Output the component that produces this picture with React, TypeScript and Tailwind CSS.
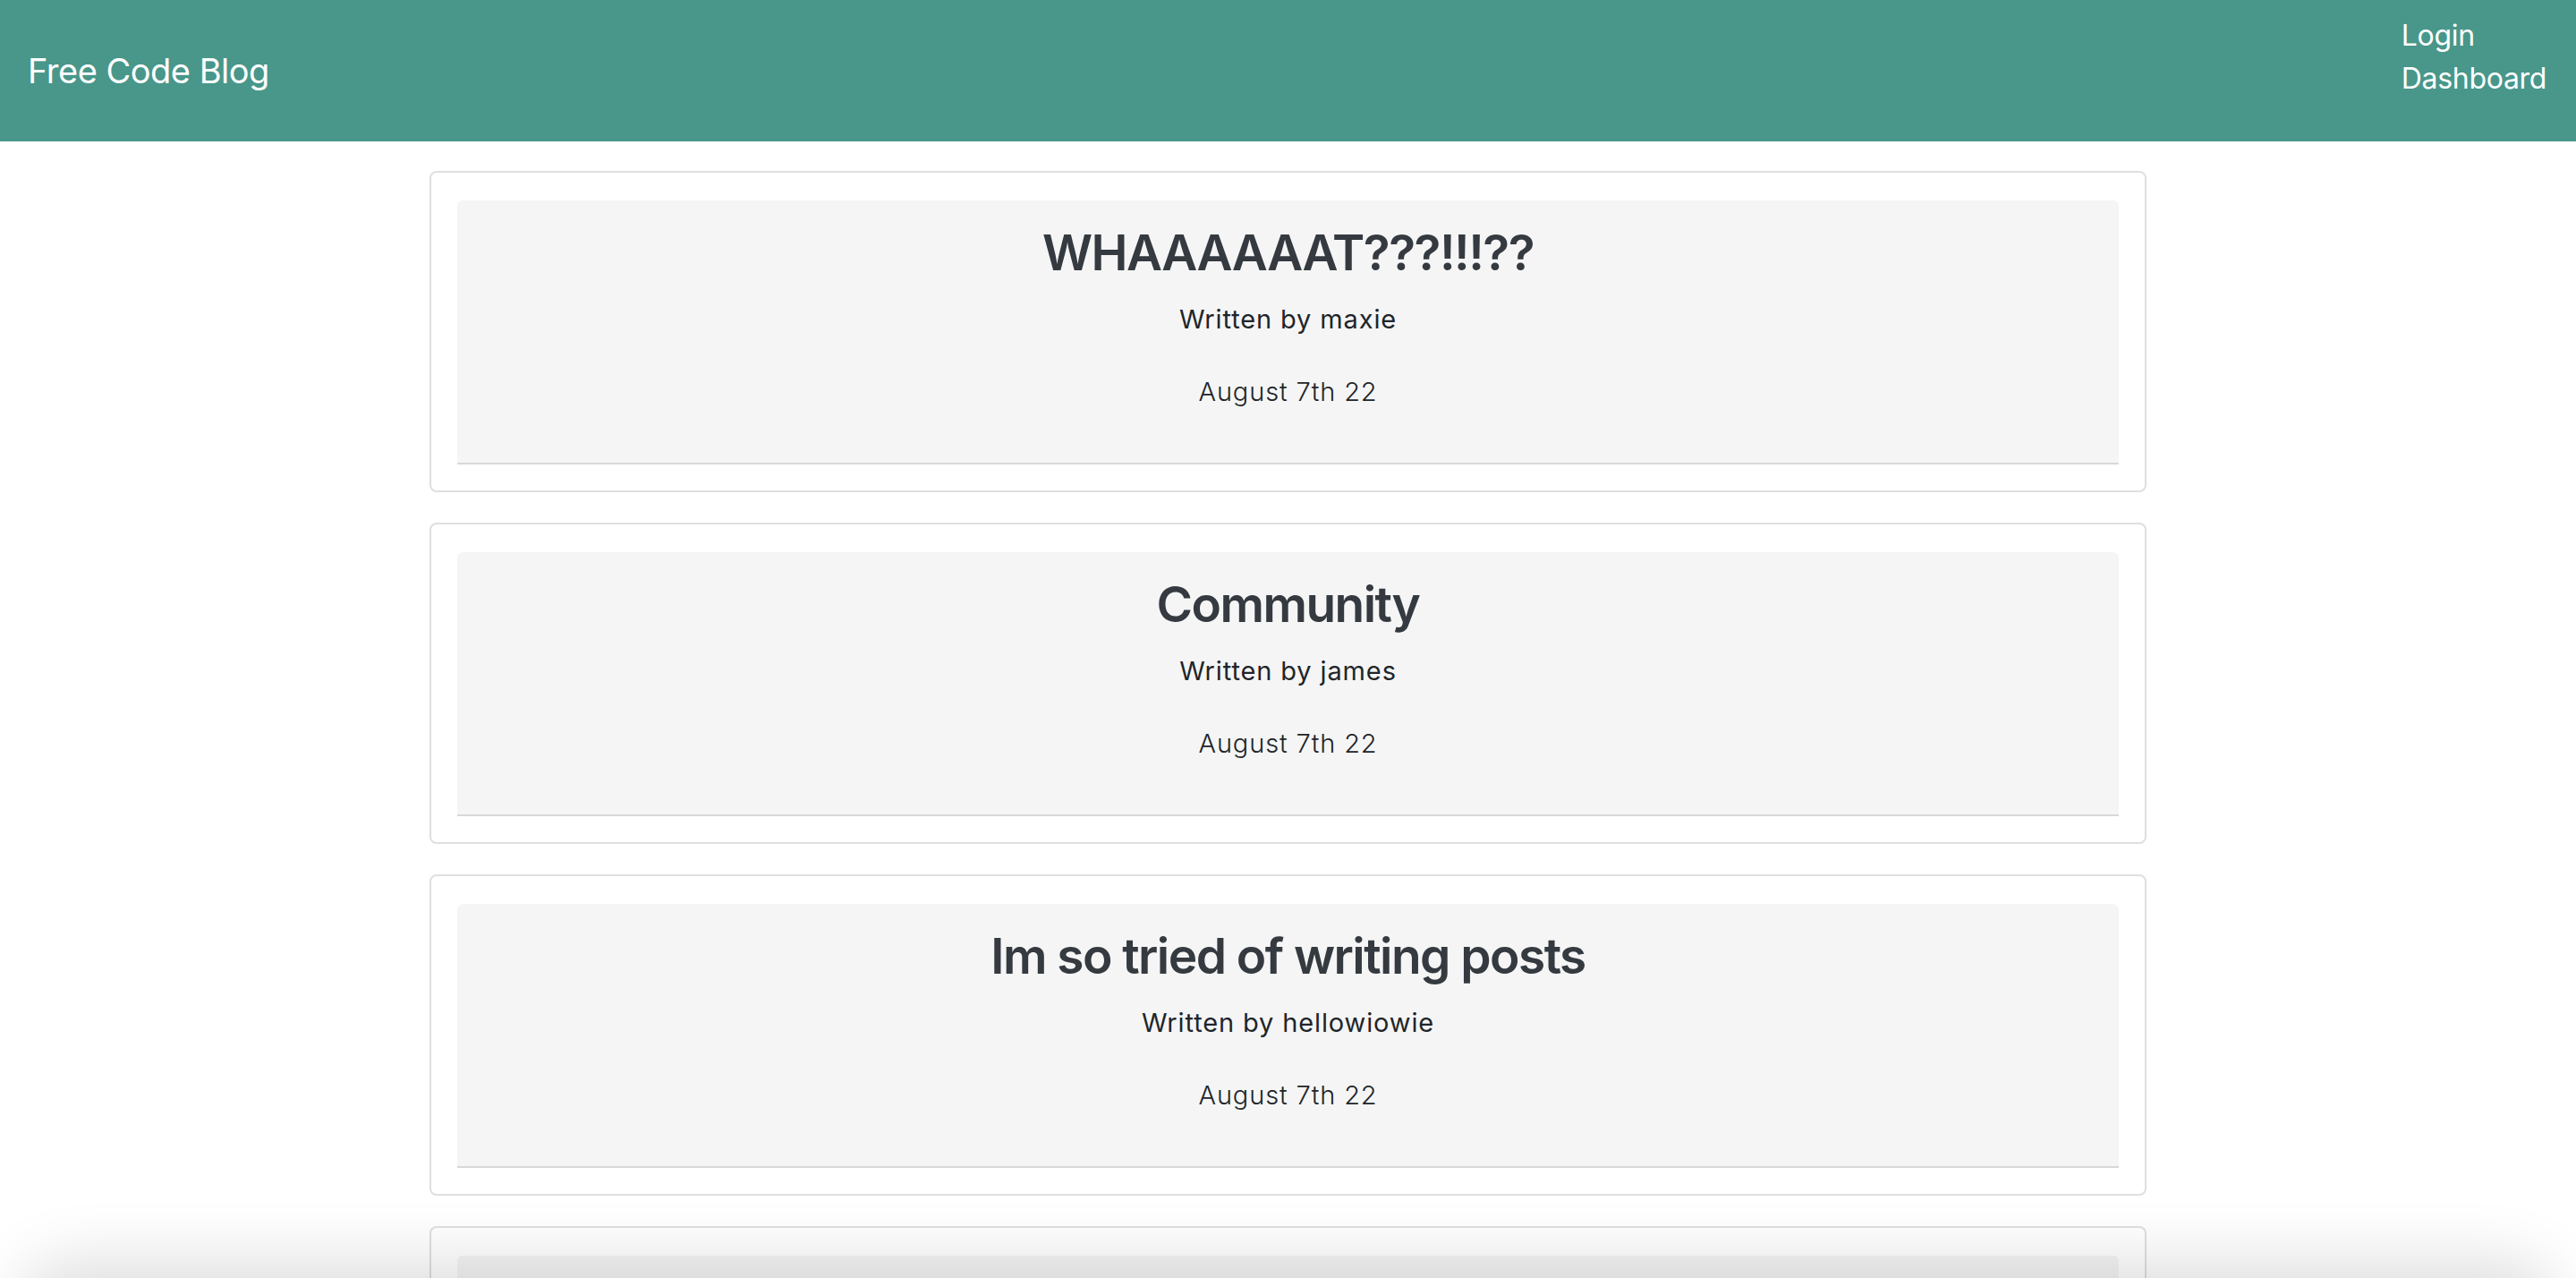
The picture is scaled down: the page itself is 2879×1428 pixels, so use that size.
import React from "react";

const posts = [
  { title: "WHAAAAAAT???!!!??", author: "maxie", date: "August 7th 22" },
  { title: "Community", author: "james", date: "August 7th 22" },
  { title: "Im so tried of writing posts", author: "hellowiowie", date: "August 7th 22" },
  { title: "Another post", author: "maxie", date: "August 7th 22" },
];

function PostCard({ title, author, date }: { title: string; author: string; date: string }) {
  return (
    <div className="rounded-[8px] border-2 border-[#dfdfdf] bg-white p-[29px] pt-[31px]">
      <div className="flex flex-col items-center rounded-t-[6px] border-b-2 border-[#d8d8d8] bg-[#f5f5f5] pt-[25px] pb-[58px] text-center">
        <h2 className="text-[55px] font-semibold leading-[1.2] tracking-[-0.028em] text-[#343a40]">{title}</h2>
        <p className="mt-[20px] text-[29px] leading-[1.5] tracking-[0.03em] text-[#212529]">Written by {author}</p>
        <p className="mt-[37px] text-[29px] font-light leading-[1.5] tracking-[0.03em] text-[#212529]">{date}</p>
      </div>
    </div>
  );
}

export default function App() {
  return (
    <div className="min-h-screen bg-white font-['Inter',sans-serif]">
      <header className="flex h-[158px] items-start justify-between bg-[#48978a] pl-[31px] pr-[33px]">
        <div className="self-center text-[38px] leading-[1.5] tracking-[-0.013em] text-white">Free Code Blog</div>
        <nav className="flex flex-col pt-[16px] text-[32px] leading-[48px] tracking-[-0.01em] text-white">
          <span>Login</span>
          <span>Dashboard</span>
        </nav>
      </header>
      <main className="mx-auto mt-[33px] flex w-2/3 flex-col gap-[34px] pb-[40px]">
        {posts.map((p, i) => (
          <PostCard key={i} {...p} />
        ))}
      </main>
      <div className="pointer-events-none fixed bottom-[-120px] left-[20px] right-[20px] h-[120px] rounded-[60px] shadow-[0_-20px_70px_rgba(0,0,0,0.13)]" />
    </div>
  );
}
